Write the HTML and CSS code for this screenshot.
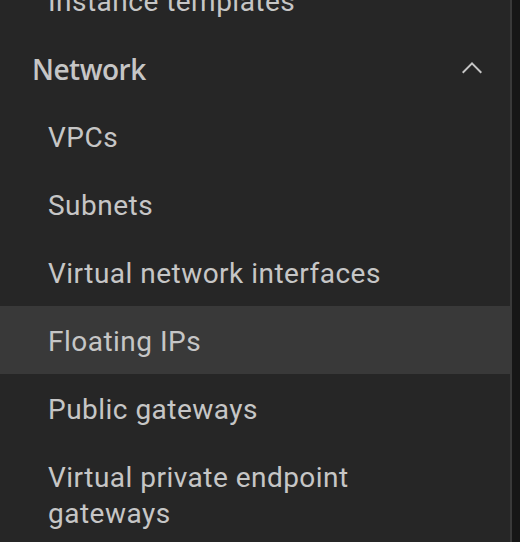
FILE: index.html
```html
<!DOCTYPE html>
<html lang="en">
<head>
<meta charset="utf-8">
<link rel="stylesheet" href="styles.css">
</head>
<body>
<nav class="sidenav">
  <ul class="menu">
    <li class="item"><a class="link">Instance templates</a></li>
  </ul>
  <div class="group">
    <button class="group-title" type="button">
      <span class="group-label">Network</span>
      <svg class="chevron" viewBox="0 0 16 16" width="32" height="32" aria-hidden="true"><path d="M8 5L13 10 12.3 10.7 8 6.4 3.7 10.7 3 10z" fill="currentColor"/></svg>
    </button>
    <ul class="menu">
      <li class="item"><a class="link">VPCs</a></li>
      <li class="item"><a class="link">Subnets</a></li>
      <li class="item"><a class="link">Virtual network interfaces</a></li>
      <li class="item is-hover"><a class="link">Floating IPs</a></li>
      <li class="item"><a class="link">Public gateways</a></li>
      <li class="item"><a class="link">Virtual private endpoint gateways</a></li>
    </ul>
  </div>
</nav>
</body>
</html>
```
FILE: styles.css
```css
html, body {
  margin: 0;
  padding: 0;
  background: #161616;
  height: 100%;
  overflow: hidden;
}
.sidenav {
  width: 512px;
  height: 100%;
  background: #262626;
  box-shadow: inset -2px 0 0 #393939;
  font-family: Roboto, "Noto Sans", sans-serif;
  color: #c6c6c6;
  margin-top: -34px;
  padding-bottom: 34px;
}
.menu {
  list-style: none;
  margin: 0;
  padding: 0;
}
.item {
  display: block;
}
.link {
  display: block;
  padding: 18px 120px 14px 48px;
  font-size: 28px;
  line-height: 36px;
  letter-spacing: 0.48px;
  color: #c6c6c6;
}
.item.is-hover {
  background: #393939;
}
.group-title {
  display: flex;
  align-items: center;
  justify-content: space-between;
  width: 100%;
  height: 68px;
  padding: 0 24px 0 32px;
  border: 0;
  background: transparent;
  color: #c6c6c6;
  font-family: inherit;
  text-align: left;
}
.group-label {
  font-family: "Open Sans", Roboto, sans-serif;
  font-size: 28px;
  font-weight: 600;
  line-height: 36px;
  letter-spacing: -0.5px;
  padding-top: 1px;
}
.chevron {
  display: block;
  flex: none;
}
```
